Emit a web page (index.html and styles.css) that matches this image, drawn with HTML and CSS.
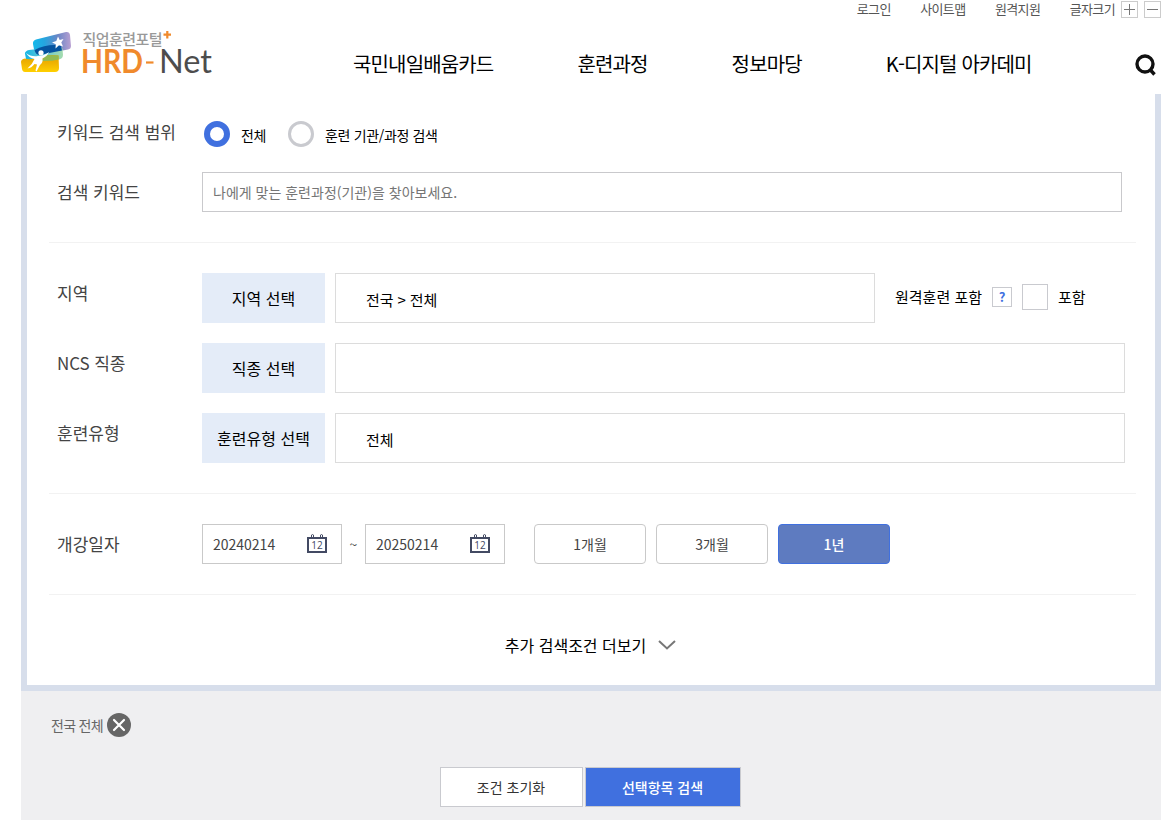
FILE: index.html
```html
<!DOCTYPE html>
<html lang="ko">
<head>
    <meta charset="UTF-8">
    <meta name="viewport" content="width=device-width, initial-scale=1.0">
    <title>직업훈련포털 HRD-Net</title>
    <link rel="stylesheet" href="styles.css">
</head>
<body>
    <header class="header">
        <div class="util">
            <a class="util-link">로그인</a>
            <a class="util-link">사이트맵</a>
            <a class="util-link">원격지원</a>
            <span class="font-size">글자크기</span>
            <button class="size-btn" aria-label="크게">
                <svg width="15" height="15"><path d="M2 7.5h11M7.5 2v11" stroke="#777" fill="none"/></svg>
            </button>
            <button class="size-btn" aria-label="작게">
                <svg width="15" height="15"><path d="M2 7.5h11" stroke="#777" fill="none"/></svg>
            </button>
        </div>
        <div class="gnb">
            <svg class="logo" width="200" height="50" viewBox="0 0 200 50">
                <defs>
                    <linearGradient id="flag-top" x1="0" x2="1">
                        <stop offset="0" stop-color="#14b8ea"/>
                        <stop offset=".3" stop-color="#25a5df"/>
                        <stop offset=".65" stop-color="#6a86c6"/>
                        <stop offset="1" stop-color="#b9a0d2"/>
                    </linearGradient>
                    <linearGradient id="flag-mid" x1="0" x2="1">
                        <stop offset="0" stop-color="#12b4e4"/>
                        <stop offset=".4" stop-color="#5cc4d8"/>
                        <stop offset="1" stop-color="#a5dcae"/>
                    </linearGradient>
                    <linearGradient id="flag-bottom" x1="0" y1="0" x2="0" y2="1">
                        <stop offset="0" stop-color="#e0a000"/>
                        <stop offset=".5" stop-color="#f0b400"/>
                        <stop offset="1" stop-color="#ffd000"/>
                    </linearGradient>
                </defs>
                <path d="M12 13Q11.500 9.500 15 8.500L45 1Q48.500 .5 49 4L50 15Q50 18 47 18.500L18 24Q14 24 13.500 21Z" fill="url(#flag-top)"/>
                <path d="M4 22.500Q4 20 8 19L38 15.500Q41 15.500 41.500 18L42 24Q42 27.500 38 28.500L9 31Q6 31 5 28Z" fill="url(#flag-mid)"/>
                <path d="M13.500 19Q26 12.500 40 14.500L41 19.500L18 24Q14.500 23.500 13.500 19Z" fill="#06549f"/>
                <path d="M0 31Q0 28 4 27.500Q8 29 14 27.500Q26 22.500 37.500 24.500L38 37Q38 41 34 41L4 41Q1.500 41 1 38Z" fill="url(#flag-bottom)"/>
                <path d="M20 30Q30 30.500 37.500 28.500L37.500 24.500L25 24Z" fill="#92bb54"/>
                <path d="M37 5.500L38.700 9L42.500 8L40.300 11.500L42 15.500L38 14.200L34.500 17.500L34.800 13.200L31 11.500L35.300 10Z" fill="#fff"/>
                <circle cx="20" cy="21.800" r="2.600" fill="#fff"/>
                <path d="M5 22Q10 26 17 25Q23 25 28 21Q26 25.500 21.500 27.500Q22 32 19 34L15.500 40.500L14.500 39.500L16 33.500L13.500 33Q10.500 37 6.500 37.500Q11 34 13.500 28Q8 27 5 22Z" fill="#fff"/>
                <text class="logo-sub" x="61.500" y="13.500" textLength="80">직업훈련포털</text>
                <path d="M146.300 0v7.500M142.500 3.700h7.500" stroke="#f08a2c" stroke-width="2.200" fill="none"/>
                <text class="logo-hrd" x="60" y="42" textLength="62" lengthAdjust="spacingAndGlyphs">HRD</text>
                <path d="M125 31.500h7.500" stroke="#f08a2c" stroke-width="2.200" fill="none"/>
                <text class="logo-net" x="138" y="42" textLength="53" lengthAdjust="spacingAndGlyphs">Net</text>
            </svg>
            <nav class="menu">
                <a class="menu-link">국민내일배움카드</a>
                <a class="menu-link">훈련과정</a>
                <a class="menu-link">정보마당</a>
                <a class="menu-link">K-디지털 아카데미</a>
            </nav>
            <svg class="search-icon" width="22" height="24" viewBox="0 0 22 24">
                <circle cx="10" cy="10" r="8" stroke="#111" stroke-width="3.400" fill="none"/>
                <path d="M15 15.500l4.500 5" stroke="#111" stroke-width="3.400" fill="none"/>
            </svg>
        </div>
    </header>

    <main class="container">
        <form class="search-box">
            <section class="section keyword">
                <div class="row scope">
                    <span class="label">키워드 검색 범위</span>
                    <span class="radio checked"></span>
                    <span class="radio-text">전체</span>
                    <span class="radio"></span>
                    <span class="radio-text">훈련 기관/과정 검색</span>
                </div>
                <div class="row">
                    <span class="label">검색 키워드</span>
                    <input class="keyword-input" type="text" placeholder="나에게 맞는 훈련과정(기관)을 찾아보세요.">
                </div>
            </section>

            <section class="section options">
                <div class="row">
                    <span class="label up">지역</span>
                    <button type="button" class="select-btn">지역 선택</button>
                    <div class="value region">전국 &gt; 전체</div>
                    <div class="remote">
                        <span>원격훈련 포함</span>
                        <span class="help">?</span>
                        <span class="checkbox"></span>
                        <span>포함</span>
                    </div>
                </div>
                <div class="row">
                    <span class="label up ncs">NCS 직종</span>
                    <button type="button" class="select-btn">직종 선택</button>
                    <div class="value"></div>
                </div>
                <div class="row">
                    <span class="label up">훈련유형</span>
                    <button type="button" class="select-btn">훈련유형 선택</button>
                    <div class="value">전체</div>
                </div>
            </section>

            <section class="section">
                <div class="row">
                    <span class="label">개강일자</span>
                    <div class="date">
                        <span>20240214</span>
                        <svg width="20" height="20" viewBox="0 0 20 20">
                            <path d="M1 4h18v14H1z" stroke="#434a63" stroke-width="2" fill="none"/>
                            <path d="M4.500 4V1q1-1 2 0V4M13.500 4V1q1-1 2 0V4" stroke="#434a63" fill="none"/>
                            <text class="cal-num" x="10" y="14.500">12</text>
                        </svg>
                    </div>
                    <span class="tilde">~</span>
                    <div class="date">
                        <span>20250214</span>
                        <svg width="20" height="20" viewBox="0 0 20 20">
                            <path d="M1 4h18v14H1z" stroke="#434a63" stroke-width="2" fill="none"/>
                            <path d="M4.500 4V1q1-1 2 0V4M13.500 4V1q1-1 2 0V4" stroke="#434a63" fill="none"/>
                            <text class="cal-num" x="10" y="14.500">12</text>
                        </svg>
                    </div>
                    <div class="periods">
                        <button type="button" class="period">1개월</button>
                        <button type="button" class="period">3개월</button>
                        <button type="button" class="period active">1년</button>
                    </div>
                </div>
            </section>

            <div class="more">
                <span>추가 검색조건 더보기</span>
                <svg width="18" height="10" viewBox="0 0 18 10"><path d="M1 1l8 7.500l8-7.500" stroke="#777" stroke-width="2" fill="none"/></svg>
            </div>
        </form>

        <div class="result">
            <div class="tag">
                <span>전국 전체</span>
                <svg width="24" height="24" viewBox="0 0 24 24">
                    <circle cx="12" cy="12" r="12" fill="#666"/>
                    <path d="M7 7l10 10M17 7L7 17" stroke="#fff" stroke-width="2.200" stroke-linecap="round"/>
                </svg>
            </div>
            <div class="actions">
                <button type="button" class="reset">조건 초기화</button>
                <button type="button" class="submit">선택항목 검색</button>
            </div>
        </div>
    </main>
</body>
</html>
```
FILE: styles.css
```css
* {
    box-sizing: border-box;
}
body {
    margin: 0;
    height: 820px;
    overflow: hidden;
    font-family: "Noto Sans CJK KR", sans-serif;
    font-size: 14px;
    line-height: 20px;
    color: #000;
    background-color: #fff;
}
button, input {
    font-family: inherit;
    font-size: 14px;
    padding: 0;
}
svg {
    display: block;
    flex: none;
}
.header {
    width: 1140px;
    height: 94px;
    margin-left: 21px;
}
.util {
    display: flex;
    justify-content: flex-end;
    height: 24px;
    font-size: 13px;
    line-height: 18px;
    letter-spacing: -0.65px;
    color: #555;
}
.util-link {
    margin-right: 29.5px;
}
.font-size {
    margin-right: 6px;
}
.size-btn {
    width: 17px;
    height: 17px;
    margin-top: 1px;
    border: 1px solid #ccc;
    background-color: #fff;
}
.size-btn + .size-btn {
    margin-left: 6px;
}
.gnb {
    display: flex;
    padding-top: 7px;
}
.logo {
    overflow: visible;
}
.logo-sub {
    font-size: 15px;
    font-weight: 500;
    fill: #999;
}
.logo-hrd {
    font-family: Lato, sans-serif;
    font-size: 32px;
    font-weight: 700;
    fill: #f08a2c;
}
.logo-net {
    font-family: Lato, sans-serif;
    font-size: 32px;
    font-weight: 400;
    fill: #4d4d4d;
}
.menu {
    display: flex;
    gap: 84px;
    margin-left: 132px;
    padding-top: 17px;
    font-size: 20px;
    line-height: 31px;
    letter-spacing: -0.85px;
    white-space: nowrap;
}
.search-icon {
    margin: 23px 4px 0 auto;
}
.container {
    width: 1140px;
    margin-left: 21px;
}
.search-box {
    height: 597px;
    padding: 0 19px 0 22px;
    border: 6px solid #d7deeb;
    border-top: 0;
}
.section {
    padding: 30px 0 30px 8px;
    border-bottom: 1px solid #f2f2f2;
}
.keyword {
    padding-top: 20px;
}
.row {
    display: flex;
    align-items: center;
}
.scope {
    height: 40px;
    margin-bottom: 18px;
}
.label {
    width: 145px;
    font-size: 17px;
    line-height: 26px;
    color: #444;
}
.label.up {
    padding-bottom: 10px;
}
.scope .label {
    padding-bottom: 4px;
}
.ncs {
    letter-spacing: -0.1px;
}
.radio {
    width: 26px;
    height: 26px;
    margin-left: 2px;
    border: 3px solid #c9cacf;
    border-radius: 50%;
}
.radio.checked {
    border: 6px solid #4070df;
}
.radio-text {
    margin: 2px 20px 0 11px;
    letter-spacing: -0.35px;
}
.keyword-input {
    width: 920px;
    height: 40px;
    padding: 0 10px;
    border: 1px solid #c9c9cc;
}
.keyword-input::placeholder {
    color: #757575;
}
.options {
    display: flex;
    flex-direction: column;
    gap: 20px;
}
.select-btn {
    width: 123px;
    height: 50px;
    margin-right: 10px;
    border: 0;
    font-size: 16px;
    background-color: #e4ecf8;
}
.value {
    width: 790px;
    height: 50px;
    padding: 2px 30px 0;
    border: 1px solid #dcdcdc;
    font-size: 15px;
    line-height: 48px;
}
.region {
    width: 540px;
    letter-spacing: -0.1px;
}
.remote {
    display: flex;
    align-items: center;
    margin-left: 20px;
    padding-bottom: 3px;
    font-size: 15px;
}
.help {
    width: 20px;
    height: 20px;
    margin: 0 10px;
    border: 1px solid #c9cacf;
    font-size: 13px;
    font-weight: 700;
    line-height: 18px;
    text-align: center;
    color: #4070df;
}
.checkbox {
    width: 26px;
    height: 26px;
    margin-right: 10px;
    border: 1px solid #c9cacf;
}
.date {
    display: flex;
    align-items: center;
    justify-content: space-between;
    width: 140px;
    height: 40px;
    padding: 0 14px 0 10px;
    border: 1px solid #c9c9c9;
    color: #444;
}
.date svg {
    margin-bottom: 1px;
}
.cal-num {
    font-family: "Open Sans", sans-serif;
    font-size: 10px;
    font-weight: 500;
    text-anchor: middle;
    fill: #434a63;
}
.tilde {
    width: 23px;
    text-align: center;
    color: #444;
}
.periods {
    display: flex;
    gap: 10px;
    margin-left: 29px;
}
.period {
    width: 112px;
    height: 40px;
    border: 1px solid #c9c9c9;
    border-radius: 4px;
    color: #444;
    background-color: #fff;
}
.period.active {
    border-color: #4070df;
    font-weight: 500;
    color: #fff;
    background-color: #5e7bc0;
}
.more {
    display: flex;
    align-items: center;
    justify-content: center;
    gap: 12px;
    padding: 38px 4px 0 0;
    font-size: 16px;
    line-height: 24px;
}
.result {
    height: 129px;
    padding: 22px 31px 0 29px;
    background-color: #efeff1;
}
.tag {
    display: flex;
    align-items: center;
    gap: 4px;
    padding-left: 1px;
    letter-spacing: -0.7px;
    color: #666;
}
.actions {
    display: flex;
    justify-content: center;
    gap: 2px;
    margin-top: 30px;
}
.reset, .submit {
    width: 143px;
    height: 40px;
    border: 1px solid #c9cacf;
    color: #333;
    background-color: #fff;
}
.submit {
    width: 156px;
    font-weight: 500;
    color: #fff;
    background-color: #4070df;
}
```
